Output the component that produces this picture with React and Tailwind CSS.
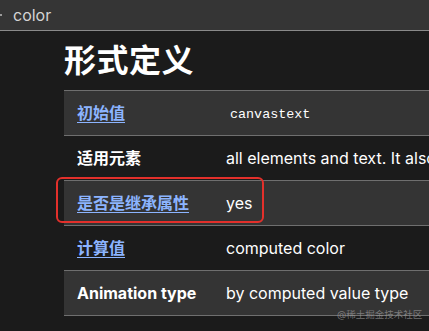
import React from 'react'

const rows = [
  { label: '初始值', link: true, value: 'canvastext', code: true },
  { label: '适用元素', value: 'all elements and text. It also applies to ::first-letter and ::first-line.' },
  { label: '是否是继承属性', link: true, value: 'yes' },
  { label: '计算值', link: true, value: 'computed color' },
  { label: 'Animation type', value: 'by computed value type' },
]

const font = { fontFamily: 'Inter, "Noto Sans CJK SC", sans-serif' }

export default function App() {
  return (
    <div className="w-[429px] h-[331px] overflow-hidden bg-[#1b1b1b] text-white relative" style={font}>
      {/* breadcrumb bar */}
      <div className="h-[31px] bg-[#353535] border-b border-[#8a8a8a] flex items-center relative">
        <span className="absolute left-0 top-[14px] w-[2px] h-[2px] bg-[#9a9a9a]" />
        <span className="pl-[13px] text-[16px] text-[#d4d4d4]">color</span>
      </div>

      <div className="pl-[64px]">
        <h2 className="h-[59px] flex items-center text-[32px] font-bold leading-none tracking-[0.5px]">形式定义</h2>

        <table className="table-fixed border-collapse w-[560px] border-t border-[#6f6f6f]">
          <colgroup>
            <col className="w-[149px]" />
            <col />
          </colgroup>
          <tbody>
            {rows.map((row, i) => (
              <tr key={row.label} className={`h-[45px] border-b border-[#6f6f6f] ${i % 2 === 0 ? 'bg-[#343434]' : 'bg-[#1b1b1b]'}`}>
                <th className="pl-[13px] text-left text-[16px] font-bold whitespace-nowrap">
                  {row.link ? (
                    <a className="text-[#8cb4ff] underline underline-offset-[3px]">{row.label}</a>
                  ) : (
                    <span className="text-white">{row.label}</span>
                  )}
                </th>
                <td className="pl-[13px] text-[16px] text-white whitespace-nowrap overflow-hidden">
                  {row.code ? (
                    <code className="px-[4px] text-[13.4px]" style={{ fontFamily: '"Liberation Mono", monospace' }}>{row.value}</code>
                  ) : row.value}
                </td>
              </tr>
            ))}
          </tbody>
        </table>
      </div>

      {/* highlight around the inheritance row */}
      <div className="absolute left-[56px] top-[177px] w-[208px] h-[46px] border-2 border-[#e3302b] rounded-[6px]" />

      <span className="absolute left-[337px] top-[308px] text-[9.5px] text-[#9a9a9a]/70">@稀土掘金技术社区</span>
    </div>
  )
}
